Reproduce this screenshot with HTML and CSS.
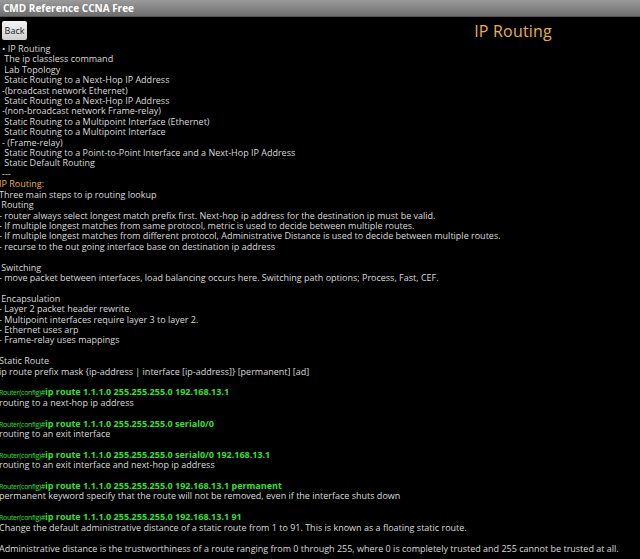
FILE: index.html
```html
<!DOCTYPE html>
<html lang="en">
<head>
  <meta charset="UTF-8" />
  <title>CMD Reference CCNA Free</title>
  <link rel="stylesheet" href="styles.css">
</head>
<body>
  <div class="titlebar">CMD Reference CCNA Free</div>
  <div class="toolbar">
    <div class="back">Back</div>
    <div class="heading">IP Routing</div>
  </div>

  <div class="content">
    <div class="toc">&bull; IP Routing
 The ip classless command
 Lab Topology
 Static Routing to a Next-Hop IP Address
-(broadcast network Ethernet)
 Static Routing to a Next-Hop IP Address
-(non-broadcast network Frame-relay)
 Static Routing to a Multipoint Interface (Ethernet)
 Static Routing to a Multipoint Interface
- (Frame-relay)
 Static Routing to a Point-to-Point Interface and a Next-Hop IP Address
 Static Default Routing
---</div>
<div class="body"><span class="section">IP Routing:</span>
Three main steps to ip routing lookup
 Routing
- router always select longest match prefix first. Next-hop ip address for the destination ip must be valid.
- If multiple longest matches from same protocol, metric is used to decide between multiple routes.
- If multiple longest matches from different protocol, Administrative Distance is used to decide between multiple routes.
- recurse to the out going interface base on destination ip address

 Switching
- move packet between interfaces, load balancing occurs here. Switching path options; Process, Fast, CEF.

 Encapsulation
- Layer 2 packet header rewrite.
- Multipoint interfaces require layer 3 to layer 2.
- Ethernet uses arp
- Frame-relay uses mappings

Static Route
ip route prefix mask {ip-address | interface [ip-address]} [permanent] [ad]

<span class="cmd"><span class="prompt">Router(config)#</span>ip route 1.1.1.0 255.255.255.0 192.168.13.1</span>
routing to a next-hop ip address

<span class="cmd"><span class="prompt">Router(config)#</span>ip route 1.1.1.0 255.255.255.0 serial0/0</span>
routing to an exit interface

<span class="cmd"><span class="prompt">Router(config)#</span>ip route 1.1.1.0 255.255.255.0 serial0/0 192.168.13.1</span>
routing to an exit interface and next-hop ip address

<span class="cmd"><span class="prompt">Router(config)#</span>ip route 1.1.1.0 255.255.255.0 192.168.13.1 permanent</span>
permanent keyword specify that the route will not be removed, even if the interface shuts down

<span class="cmd"><span class="prompt">Router(config)#</span>ip route 1.1.1.0 255.255.255.0 192.168.13.1 91</span>
Change the default administrative distance of a static route from 1 to 91. This is known as a floating static route.

Administrative distance is the trustworthiness of a route ranging from 0 through 255, where 0 is completely trusted and 255 cannot be trusted at all.</div>
  </div>
</body>
</html>
```

FILE: styles.css
```css
* {
  box-sizing: border-box;
}
body {
  margin: 0;
  background: #000;
  color: #dadada;
  font-family: "Open Sans", "Noto Sans", sans-serif;
  overflow: hidden;
}

.titlebar {
  height: 17px;
  line-height: 17px;
  padding-left: 3px;
  font-size: 10px;
  font-weight: bold;
  color: #fff;
  background: linear-gradient(#9a9a9a, #6e6e6e);
  border-bottom: 1px solid #555;
}

.toolbar {
  display: flex;
  align-items: center;
  justify-content: space-between;
  padding: 2px 88px 0 2px;
  height: 25px;
}

.back {
  width: 25px;
  height: 19px;
  line-height: 19px;
  text-align: center;
  font-size: 9px;
  color: #222;
  background: linear-gradient(#f4f4f4, #cfcfcf);
  border-radius: 2px;
}

.heading {
  font-size: 16px;
  color: #e8b24a;
  letter-spacing: 0.2px;
}

.content {
  font-size: 9px;
  line-height: 10.4px;
  padding-top: 2px;
}

.toc {
  white-space: pre;
  padding-left: 2px;
}

.body {
  white-space: pre;
  margin-left: -1px;
}

.section {
  color: #e8b24a;
}

.cmd {
  color: #33e033;
  font-weight: bold;
}

.prompt {
  font-size: 7px;
  font-weight: normal;
  letter-spacing: -0.3px;
  line-height: 0;
}
```
